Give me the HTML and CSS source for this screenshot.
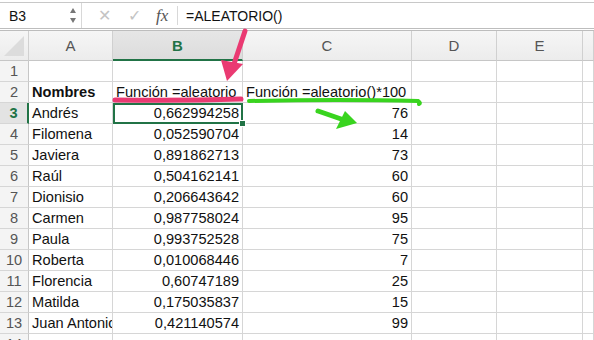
FILE: index.html
```html
<!DOCTYPE html>
<html lang="es">
<head>
  <meta charset="UTF-8" />
  <title>ALEATORIO | Hoja</title>
  <link rel="stylesheet" href="styles.css">
</head>
<body>
  <div class="formula-bar">
    <div class="name-box">
      <span>B3</span>
      <span class="spin"><i class="up"></i><i class="down"></i></span>
    </div>
    <div class="actions">
      <span class="act">&#x2715;</span>
      <span class="act">&#x2713;</span>
      <span class="fx">fx</span>
    </div>
    <div class="formula">=ALEATORIO()</div>
  </div>

  <div class="sheet">
    <div class="row head">
      <div class="corner"><i></i></div>
      <div>A</div><div class="sel">B</div><div>C</div><div>D</div><div>E</div><div></div>
    </div>
    <div class="row"><div class="rh">1</div><div></div><div></div><div></div><div></div><div></div><div></div></div>
    <div class="row"><div class="rh">2</div><div class="b">Nombres</div><div>Función =aleatorio</div><div>Función =aleatorio()*100</div><div></div><div></div><div></div></div>
    <div class="row"><div class="rh cur">3</div><div>Andrés</div><div class="n active">0,662994258<i class="handle"></i></div><div class="n">76</div><div></div><div></div><div></div></div>
    <div class="row"><div class="rh">4</div><div>Filomena</div><div class="n">0,052590704</div><div class="n">14</div><div></div><div></div><div></div></div>
    <div class="row"><div class="rh">5</div><div>Javiera</div><div class="n">0,891862713</div><div class="n">73</div><div></div><div></div><div></div></div>
    <div class="row"><div class="rh">6</div><div>Raúl</div><div class="n">0,504162141</div><div class="n">60</div><div></div><div></div><div></div></div>
    <div class="row"><div class="rh">7</div><div>Dionisio</div><div class="n">0,206643642</div><div class="n">60</div><div></div><div></div><div></div></div>
    <div class="row"><div class="rh">8</div><div>Carmen</div><div class="n">0,987758024</div><div class="n">95</div><div></div><div></div><div></div></div>
    <div class="row"><div class="rh">9</div><div>Paula</div><div class="n">0,993752528</div><div class="n">75</div><div></div><div></div><div></div></div>
    <div class="row"><div class="rh">10</div><div>Roberta</div><div class="n">0,010068446</div><div class="n">7</div><div></div><div></div><div></div></div>
    <div class="row"><div class="rh">11</div><div>Florencia</div><div class="n">0,60747189</div><div class="n">25</div><div></div><div></div><div></div></div>
    <div class="row"><div class="rh">12</div><div>Matilda</div><div class="n">0,175035837</div><div class="n">15</div><div></div><div></div><div></div></div>
    <div class="row"><div class="rh">13</div><div>Juan Antonio</div><div class="n">0,421140574</div><div class="n">99</div><div></div><div></div><div></div></div>
    <div class="row"><div class="rh">14</div><div></div><div></div><div></div><div></div><div></div><div></div></div>
  </div>

  <!-- hand drawn marks on top of the screenshot -->
  <svg class="marks" viewBox="0 0 594 340" width="594" height="340">
    <g fill="none" stroke-linecap="round">
      <path d="M245 31 L232 70" stroke="#ea3a72" stroke-width="5"/>
      <path d="M115 100 Q180 101 241 99" stroke="#ea3a72" stroke-width="5"/>
      <path d="M249 101 Q340 99 418 101 Q421 103 419 104" stroke="#39d41f" stroke-width="4"/>
      <path d="M318 111 L344 120" stroke="#39d41f" stroke-width="5"/>
    </g>
    <polygon points="221,60 243,64 227,81" fill="#ea3a72"/>
    <polygon points="336,129 345,111 357,123" fill="#39d41f"/>
  </svg>
</body>
</html>
```

FILE: styles.css
```css
body {
  margin: 0;
  width: 594px;
  height: 340px;
  overflow: hidden;
  position: relative;
  background: #fff;
  font-family: "Liberation Sans", Arial, sans-serif;
  color: #111;
}

/* formula bar */
.formula-bar {
  display: flex;
  margin-top: 2px;
  height: 25px;
  border-top: 1px solid #c8c8c8;
  border-bottom: 3px double #bdbdbd;
  font-size: 14px;
}
.name-box {
  width: 82px;
  display: flex;
  align-items: center;
  justify-content: space-between;
  padding: 0 5px 0 9px;
  box-sizing: border-box;
  border-right: 1px solid #d8d8d8;
}
.spin {
  display: flex;
  flex-direction: column;
  gap: 5px;
}
.spin i {
  width: 0;
  height: 0;
  border-left: 3px solid transparent;
  border-right: 3px solid transparent;
}
.spin .up { border-bottom: 5px solid #777; }
.spin .down { border-top: 5px solid #777; }
.actions {
  display: flex;
  align-items: center;
  width: 95px;
  border-right: 1px solid #d8d8d8;
  margin: 3px 0;
}
.act {
  color: #c4c4c4;
  font-size: 16px;
  margin-left: 16px;
  width: 14px;
}
.fx {
  font-family: "Liberation Serif", serif;
  font-style: italic;
  font-size: 17px;
  color: #555;
  margin-left: 14px;
}
.formula {
  display: flex;
  align-items: center;
  padding-left: 8px;
}

/* grid */
.row {
  display: grid;
  grid-template-columns: 29px 84px 130px 169px 85px 86px 1fr;
  height: 21px;
  font-size: 14.6px;
}
.row > div {
  box-sizing: border-box;
  border-right: 1px solid #d6d6d6;
  border-bottom: 1px solid #d6d6d6;
  padding: 0 3px;
  line-height: 20px;
  white-space: nowrap;
  overflow: hidden;
}
.row.head {
  height: 30px;
}
.row.head > div {
  background: linear-gradient(#f6f6f6, #ececec);
  border-bottom-color: #c6c6c6;
  border-right-color: #d0d0d0;
  text-align: center;
  line-height: 29px;
  color: #555;
  font-size: 15px;
}
.row.head > .sel {
  background: linear-gradient(#e6e6e6, #dcdcdc);
  color: #217346;
  font-weight: bold;
  border-bottom: 2px solid #217346;
}
.row.head > .corner {
  position: relative;
}
.corner i {
  position: absolute;
  right: 4px;
  bottom: 4px;
  width: 0;
  height: 0;
  border-left: 20px solid transparent;
  border-bottom: 20px solid #dcdcdc;
}
.rh {
  background: #f4f4f4;
  text-align: center;
  color: #555;
  padding: 0 !important;
  border-right-color: #c6c6c6 !important;
}
.rh.cur {
  background: #e3e3e3;
  color: #217346;
  font-weight: bold;
  border-right: 2px solid #217346 !important;
}
.b { font-weight: bold; }
.n { text-align: right; }
.active {
  position: relative;
  overflow: visible !important;
  outline: 2px solid #217346;
  outline-offset: -2px;
}
.handle {
  position: absolute;
  right: -4px;
  bottom: -4px;
  width: 5px;
  height: 5px;
  background: #217346;
  border: 1px solid #fff;
}

.marks {
  position: absolute;
  left: 0;
  top: 0;
  pointer-events: none;
}
```
